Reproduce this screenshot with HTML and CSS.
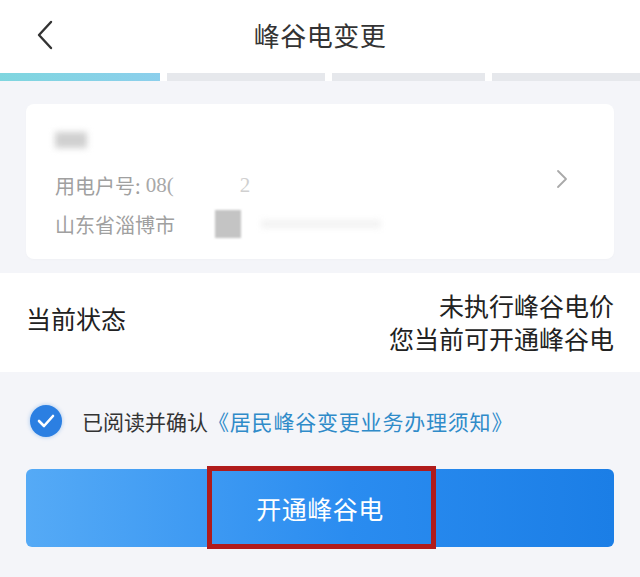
FILE: index.html
```html
<!DOCTYPE html>
<html lang="zh">
<head>
<meta charset="utf-8">
<link rel="stylesheet" href="styles.css">
</head>
<body>
<div class="page">
  <header class="topbar">
    <svg class="back" width="18" height="30" viewBox="0 0 18 30"><path d="M15 2 L3 15 L15 28" fill="none" stroke="#333" stroke-width="2.4" stroke-linecap="round" stroke-linejoin="round"/></svg>
    <h1 class="title">峰谷电变更</h1>
  </header>
  <div class="steps">
    <span class="step active"></span>
    <span class="step"></span>
    <span class="step"></span>
    <span class="step"></span>
  </div>
  <section class="card-wrap">
    <div class="card">
      <div class="info">
        <div class="name"><span class="blur-name"></span></div>
        <div class="line">用电户号: <span class="num">&nbsp;08(</span><span class="blur-gap"></span><span class="num faint">2</span></div>
        <div class="line">山东省淄博市<span class="blur-sq"></span><span class="blur-tail"></span></div>
      </div>
      <svg class="chev" width="12" height="20" viewBox="0 0 12 20"><path d="M2 2 L10 10 L2 18" fill="none" stroke="#a9a9a9" stroke-width="1.8" stroke-linecap="round" stroke-linejoin="round"/></svg>
    </div>
  </section>
  <section class="status">
    <div class="status-label">当前状态</div>
    <div class="status-value">
      <div>未执行峰谷电价</div>
      <div>您当前可开通峰谷电</div>
    </div>
  </section>
  <section class="agree">
    <span class="check">
      <svg width="18" height="14" viewBox="0 0 18 14"><path d="M2 7 L7 12 L16 2" fill="none" stroke="#fff" stroke-width="2.6" stroke-linecap="round" stroke-linejoin="round"/></svg>
    </span>
    <span class="agree-text">已阅读并确认<span class="link">《居民峰谷变更业务办理须知》</span></span>
  </section>
  <div class="btn-wrap">
    <button class="btn">开通峰谷电</button>
    <span class="highlight"></span>
  </div>
</div>
</body>
</html>
```
FILE: styles.css
```css
* { box-sizing: border-box; }
html, body { margin: 0; padding: 0; }
body {
  width: 640px;
  height: 577px;
  overflow: hidden;
  background: #f4f5f9;
  font-family: "Noto Sans CJK SC", "Noto Sans", sans-serif;
  color: #333;
}
.page { display: flex; flex-direction: column; }
.topbar {
  height: 73px;
  background: #fff;
  display: flex;
  align-items: center;
  justify-content: center;
  position: relative;
}
.back { position: absolute; left: 36px; top: 20px; }
.title {
  margin: 0;
  font-size: 26px;
  font-weight: 400;
  color: #333;
  letter-spacing: 0.5px;
  margin-top: -4px;
}
.steps {
  display: grid;
  grid-template-columns: 160px 158px 153px 1fr;
  gap: 7px;
  height: 8px;
  background: #fff;
}
.step { background: #e6e8ec; }
.step.active { background: linear-gradient(90deg, #7fd6df, #8ccfec); }
.card-wrap { padding: 23px 26px 14px; }
.card {
  background: #fff;
  border-radius: 8px;
  height: 155px;
  display: flex;
  align-items: center;
  padding: 0 46px 0 29px;
  box-shadow: 0 1px 3px rgba(0,0,0,0.02);
}
.info { flex: 1; display: flex; flex-direction: column; }
.name { height: 46px; display: flex; align-items: center; }
.blur-name {
  width: 32px; height: 16px;
  background: #d0d0d0;
  filter: blur(3px);
  margin-top: -6px;
}
.line {
  font-size: 20px;
  color: #a0a0a0;
  display: flex;
  align-items: center;
  height: 39px;
}
.num { font-family: "Liberation Serif", serif; font-size: 21px; color: #a8a8a8; }
.num.faint { color: #d0d0d0; }
.blur-gap { width: 66px; }
.blur-sq {
  width: 26px; height: 28px;
  background: #c4c4c4;
  margin-left: 40px;
  filter: blur(1px);
}
.blur-tail {
  width: 120px; height: 8px;
  background: #f2f2f2;
  margin-left: 20px;
  filter: blur(3px);
}
.chev { flex: none; margin-top: -6px; }
.status {
  background: #fff;
  height: 99px;
  display: flex;
  justify-content: space-between;
  align-items: center;
  padding: 0 26px;
  font-size: 25px;
  color: #222;
}
.status-label { margin-top: -10px; }
.status-value { text-align: right; line-height: 33px; margin-top: -2px; }
.agree {
  display: flex;
  align-items: center;
  padding: 31px 30px 0;
  height: 97px;
  align-self: flex-start;
}
.check {
  width: 32px; height: 32px;
  border-radius: 50%;
  background: #2b7fe2;
  display: flex;
  align-items: center;
  justify-content: center;
  box-shadow: 0 0 4px rgba(43,127,226,0.4);
  margin-top: -30px;
}
.agree-text {
  font-size: 21px;
  color: #333;
  margin-left: 20px;
  margin-top: -30px;
}
.link { color: #2f8bc9; letter-spacing: 0.8px; }
.btn-wrap {
  position: relative;
  padding: 0 26px;
}
.btn {
  width: 100%;
  height: 78px;
  border: none;
  border-radius: 6px;
  background: linear-gradient(90deg, #55aaf6, #2a8cf0 55%, #1b7ee6);
  color: #fff;
  font-family: "Noto Sans CJK SC", "Noto Sans", sans-serif;
  font-size: 25px;
  letter-spacing: 0.5px;
  display: block;
}
.highlight {
  position: absolute;
  left: 207px;
  top: -3px;
  width: 229px;
  height: 83px;
  border: 5px solid #b01b1b;
  pointer-events: none;
}
```
